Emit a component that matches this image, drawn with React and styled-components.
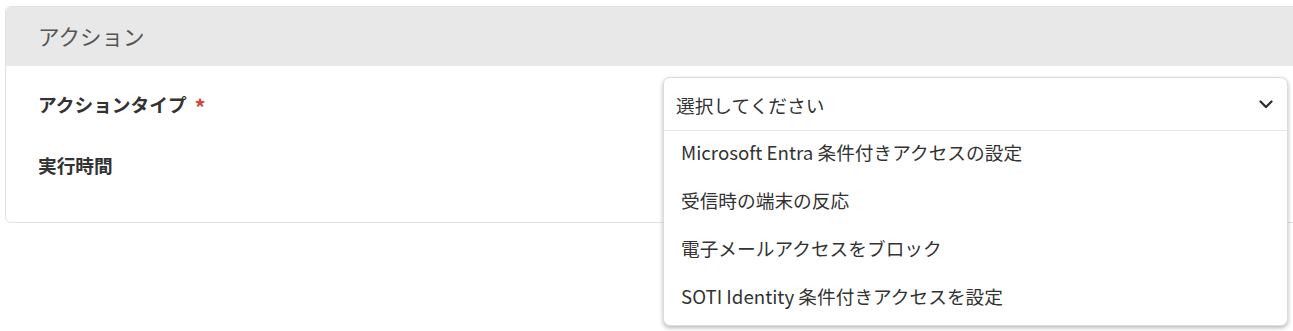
import React from 'react'
import styled, { createGlobalStyle } from 'styled-components'

const GlobalStyle = createGlobalStyle`
  body {
    margin: 0;
    background: #fff;
    font-family: "Noto Sans CJK JP", "Noto Sans", sans-serif;
  }
`

const Page = styled.div`
  height: 100vh;
  overflow: hidden;
  padding: 6px 0 0 5px;
  box-sizing: border-box;
`

const Card = styled.section`
  width: 1320px;
  border: 1px solid #e2e2e2;
  border-radius: 6px;
  background: #fff;
`

const CardHeader = styled.header`
  height: 59px;
  display: flex;
  align-items: center;
  padding: 0 0 2px 32px;
  box-sizing: border-box;
  background: #e8e8e8;
  border-radius: 5px 5px 0 0;
  font-size: 21.5px;
  color: #555;
`

const CardBody = styled.div`
  display: flex;
  flex-direction: column;
  gap: 8px;
  padding: 11px 0 31px 32px;
`

const Row = styled.div`
  display: flex;
  align-items: center;
  min-height: 53px;
`

const Label = styled.div`
  width: 625px;
  font-size: 18.7px;
  font-weight: 700;
  color: #333;
`

// asterisk glyph sits high in this font, nudge it to mid-height
const Required = styled.span`
  margin-left: 8px;
  font-size: 22px;
  font-weight: 700;
  vertical-align: -4px;
  line-height: 1;
  color: #d9453b;
`

const Field = styled.div`
  position: relative;
  width: 625px;
  height: 53px;
`

const Panel = styled.div`
  position: absolute;
  top: 0;
  left: 0;
  right: 0;
  z-index: 10;
  background: #fff;
  border: 1px solid #dcdcdc;
  border-radius: 7px;
  box-shadow: 0 2px 4px rgba(0, 0, 0, 0.28);
`

const Control = styled.div`
  height: 52px;
  display: flex;
  align-items: center;
  justify-content: space-between;
  padding: 0 13px 0 12px;
  border-bottom: 1px solid #e6e6e6;
  font-size: 18.7px;
  color: #333;
`

const Options = styled.ul`
  list-style: none;
  margin: 0;
  padding: 0 0 2px;
`

const Option = styled.li`
  height: 48px;
  box-sizing: border-box;
  display: flex;
  align-items: center;
  padding: 0 0 7px 17px;
  font-size: 18.7px;
  color: #333;
`

const Chevron = () => (
  <svg width="16" height="16" viewBox="0 0 16 16" aria-hidden>
    <path d="M2.5 5.5 8 11l5.5-5.5" fill="none" stroke="#2b2b2b" strokeWidth="2.2" strokeLinecap="round" strokeLinejoin="round" />
  </svg>
)

const options = [
  'Microsoft Entra 条件付きアクセスの設定',
  '受信時の端末の反応',
  '電子メールアクセスをブロック',
  'SOTI Identity 条件付きアクセスを設定',
]

export default function App() {
  return (
    <Page>
      <GlobalStyle />
      <Card>
        <CardHeader>アクション</CardHeader>
        <CardBody>
          <Row>
            <Label>
              アクションタイプ<Required>*</Required>
            </Label>
            <Field>
              <Panel>
                <Control>
                  <span>選択してください</span>
                  <Chevron />
                </Control>
                <Options>
                  {options.map((option) => (
                    <Option key={option}>{option}</Option>
                  ))}
                </Options>
              </Panel>
            </Field>
          </Row>
          <Row>
            <Label>実行時間</Label>
          </Row>
        </CardBody>
      </Card>
    </Page>
  )
}
